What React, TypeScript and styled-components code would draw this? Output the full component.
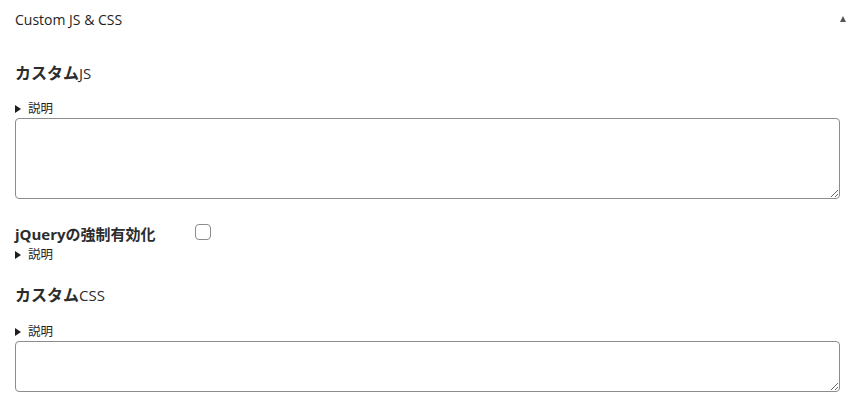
import React from "react";
import styled, { createGlobalStyle } from "styled-components";

const Global = createGlobalStyle`
  html, body { margin: 0; padding: 0; background: #fff; }
  body { font-family: "Open Sans", "Noto Sans CJK JP", sans-serif; color: #1e1e1e; }
`;

const Panel = styled.div`
  width: 859px;
  background: #fff;
`;

const PanelHeader = styled.div`
  display: flex;
  align-items: center;
  justify-content: space-between;
  height: 38px;
  padding: 0 13px 0 15px;
  font-size: 14px;
  font-weight: 500;
  color: #1e1e1e;
`;

const Caret = styled.span`
  width: 0;
  height: 0;
  border-left: 3.5px solid transparent;
  border-right: 3.5px solid transparent;
  border-bottom: 6px solid #555;
  margin-top: -1px;
`;

const Body = styled.div`
  padding: 0 19px 0 15px;
`;

const Heading = styled.div<{ $top: number }>`
  margin-top: ${(p) => p.$top}px;
  font-size: 16px;
  font-weight: 700;
  line-height: 24px;
  color: #2c2c2c;
`;

const Latin = styled.span`
  font-size: 15px;
  font-weight: 400;
`;

const Details = styled.div<{ $top: number }>`
  display: flex;
  align-items: center;
  gap: 7px;
  margin-top: ${(p) => p.$top}px;
  font-size: 12.5px;
  line-height: 14px;
  color: #1e1e1e;
`;

const Tri = styled.span`
  width: 0;
  height: 0;
  border-top: 4px solid transparent;
  border-bottom: 4px solid transparent;
  border-left: 6px solid #1e1e1e;
`;

const TextArea = styled.textarea<{ $h: number }>`
  display: block;
  box-sizing: border-box;
  width: 100%;
  height: ${(p) => p.$h}px;
  margin: 2px 0 0;
  border: 1px solid #8c8c8c;
  border-radius: 4px;
  padding: 6px 8px;
  font: inherit;
  outline: none;
`;

const Row = styled.div`
  display: flex;
  align-items: center;
  margin-top: 24px;
`;

const RowLabel = styled.div`
  width: 180px;
  font-size: 15px;
  font-weight: 700;
  line-height: 22px;
  color: #2c2c2c;
`;

const Check = styled.span`
  box-sizing: border-box;
  width: 16px;
  height: 16px;
  border: 1px solid #8c8c8c;
  border-radius: 4px;
  margin-top: -4px;
`;

export default function App() {
  return (
    <Panel>
      <Global />
      <PanelHeader>
        <span>Custom JS &amp; CSS</span>
        <Caret />
      </PanelHeader>
      <Body>
        <Heading $top={23}>
          カスタム<Latin>JS</Latin>
        </Heading>
        <Details $top={17}>
          <Tri />
          <span>説明</span>
        </Details>
        <TextArea $h={81} />
        <Row>
          <RowLabel>jQueryの強制有効化</RowLabel>
          <Check />
        </Row>
        <Details $top={3}>
          <Tri />
          <span>説明</span>
        </Details>
        <Heading $top={21}>
          カスタム<Latin>CSS</Latin>
        </Heading>
        <Details $top={18}>
          <Tri />
          <span>説明</span>
        </Details>
        <TextArea $h={51} />
      </Body>
    </Panel>
  );
}
